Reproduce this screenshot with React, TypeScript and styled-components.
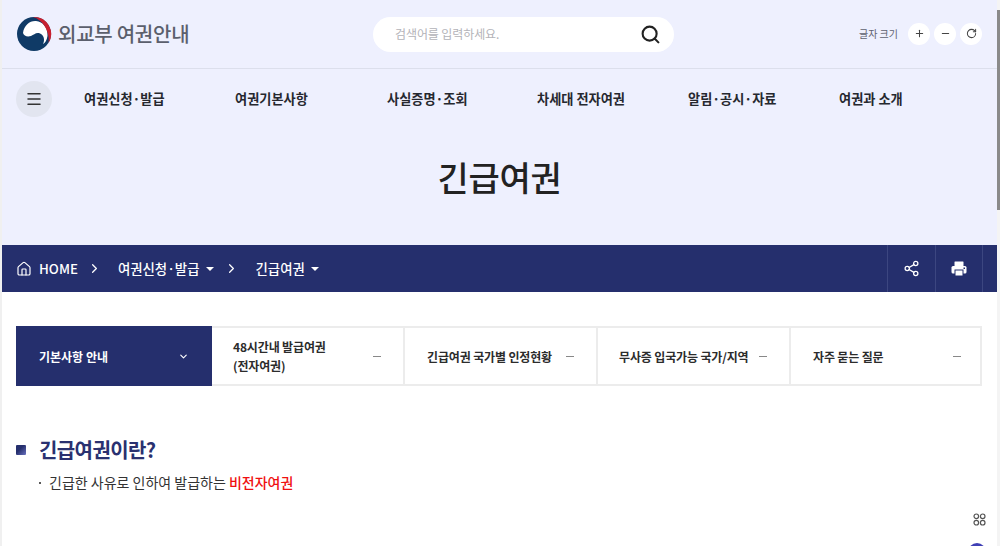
import React from "react";
import styled, { createGlobalStyle } from "styled-components";
import { Home, ChevronRight, ChevronDown, Share2, Plus, Minus, RotateCw, Search, Menu } from "lucide-react";

const Global = createGlobalStyle`
  html, body { margin: 0; padding: 0; height: 546px; overflow: hidden; background: #fff; }
  body { font-family: "Noto Sans CJK KR", "Noto Sans", sans-serif; }
  * { box-sizing: border-box; }
`;
const Page = styled.div`
  position: relative; width: 1000px; height: 546px; overflow: hidden;
  padding-left: 2px; background: #fff; border-left: 0;
  &::before { content: ""; position: absolute; left: 0; top: 0; bottom: 0; width: 2px; background: #f0f0f0; }
`;
const Scrollbar = styled.div`
  position: absolute; right: 0; top: 0; bottom: 0; width: 3px; background: #f4f4f4;
  &::after { content: ""; position: absolute; left: 0; right: 0; top: 10px; height: 200px; background: #8a8a8a; }
`;
const Header = styled.header`
  background: #eef0fe; height: 245px; display: flex; flex-direction: column;
`;
const TopRow = styled.div`
  height: 69px; border-bottom: 1px solid #dcdfec; display: flex; align-items: center;
  padding: 0 15px 1px 14px; margin-right: 3px;
`;
const Brand = styled.div`display: flex; align-items: center; gap: 6px; width: 357px; flex: none;`;
const BrandName = styled.span`
  font-size: 20px; font-weight: 500; color: #5b5f6d; letter-spacing: -0.25px; line-height: 1;
`;
const SearchBox = styled.div`
  width: 301px; height: 35px; margin-top: 1px; border-radius: 18px; background: #fff; display: flex; align-items: center;
  justify-content: space-between; padding: 0 13px 0 22px; flex: none;
`;
const Placeholder = styled.span`font-size: 12px; color: #b3b3b8; line-height: 1; letter-spacing: -0.1px;`;
const FontTools = styled.div`display: flex; align-items: center; gap: 4px; margin-left: auto;`;
const FontLabel = styled.span`font-size: 10px; color: #5f6270; margin-right: 6px; line-height: 1;`;
const RoundBtn = styled.button`
  width: 22px; height: 22px; padding: 0; border: 0; border-radius: 50%; background: #fff; color: #444;
  display: flex; align-items: center; justify-content: center;
`;
const NavRow = styled.nav`display: flex; align-items: center; height: 60px; padding-left: 14px;`;
const MenuBtn = styled.button`
  width: 36px; height: 36px; padding: 0; border: 0; border-radius: 50%; background: #e2e5f0; color: #333;
  display: flex; align-items: center; justify-content: center; flex: none; margin-right: 32px;
`;
const NavItem = styled.a<{ $w: number }>`
  width: ${(p) => p.$w}px; flex: none; font-size: 13.2px; font-weight: 600; color: #26282f; white-space: nowrap;
  padding-bottom: 2px;
`;
const Title = styled.h1`
  margin: 0; padding: 23px 3px 0 0; text-align: center; font-size: 34px; line-height: 50px; font-weight: 500;
  color: #222; letter-spacing: -0.3px;
`;
const Crumbs = styled.div`
  height: 47px; background: #252f6d; display: flex; align-items: center; padding-left: 14px; color: #fff; margin-right: 3px;
`;
const CrumbText = styled.span`font-size: 13.3px; font-weight: 500; margin-left: 7px; line-height: 1;`;
const CrumbLink = styled.span`font-size: 13.4px; font-weight: 500; line-height: 1;`;
const Caret = styled.span`
  width: 0; height: 0; margin-left: 6px; border-left: 4px solid transparent; border-right: 4px solid transparent;
  border-top: 4px solid #fff;
`;
const Sep = styled.span<{ $l: number; $r: number }>`
  display: flex; margin-left: ${(p) => p.$l}px; margin-right: ${(p) => p.$r}px;
`;
const CrumbTools = styled.div`display: flex; margin-left: auto; margin-right: 14px; height: 100%;`;
const CrumbTool = styled.button`
  width: 48px; height: 100%; padding: 0; background: transparent; border: 0; border-left: 1px solid #3c4680; color: #fff;
  display: flex; align-items: center; justify-content: center;
  &:last-child { border-right: 1px solid #3c4680; }
`;
const Tabs = styled.div`display: flex; margin: 34px 15px 0 14px; height: 60px;`;
const ActiveTab = styled.div`
  width: 196px; flex: none; background: #252f6d; color: #fff; display: flex; align-items: center;
  justify-content: space-between; padding: 0 23px; font-size: 12px; font-weight: 700;
`;
const Tab = styled.div<{ $w: number; $pl: number; $pr: number }>`
  width: ${(p) => p.$w}px; flex: none; border: 2px solid #ececec; border-left: 0; display: flex; align-items: center;
  justify-content: space-between; padding: 0 ${(p) => p.$pr}px 0 ${(p) => p.$pl}px; font-size: 12px; font-weight: 600;
  color: #2c2c2c; line-height: 19px; letter-spacing: -0.15px;
`;
const Dash = styled.span`width: 8px; height: 1px; background: #888; flex: none;`;
const Section = styled.section`padding: 51px 0 0 14px;`;
const Heading = styled.h2`
  margin: 0; display: flex; align-items: center; gap: 13px; font-size: 20px; line-height: 26px; font-weight: 700;
  color: #2a3170; letter-spacing: -0.6px;
`;
const Square = styled.span`
  width: 10px; height: 10px; background: linear-gradient(135deg, #252f6d 40%, #6a72c0); border-radius: 1px;
`;
const Bullet = styled.p`
  margin: 8px 0 0 23px; font-size: 14px; line-height: 22px; color: #333; display: flex; align-items: center; gap: 8px;
  &::before { content: ""; width: 2px; height: 2px; margin-top: 2px; background: #222; border-radius: 50%; flex: none; }
`;
const Red = styled.b`color: #f01010; font-weight: 500;`;
const QuickBtn = styled.div`
  position: absolute; right: 3px; top: 504px; width: 36px; height: 30px; display: flex; align-items: center;
  justify-content: center; color: #555; background: rgba(255,255,255,.7);
`;
const FloatDot = styled.div`
  position: absolute; left: 968px; top: 543px; width: 18px; height: 18px; border-radius: 50%; background: #3f3fb5;
`;

const Logo = () => (
  <svg width="36" height="36" viewBox="0 0 36 36">
    <circle cx="18" cy="18" r="17" fill="#0f3a66" />
    <path d="M7 17 C8 9 14 4.5 20 5 C27 5.5 32 12 31.5 20 C31 24 29 27 27 28 C29 24 28 19 24 17.5 C20 16 18 19 15 20 C11 21 8 20 7 17Z" fill="#fff" />
    <path d="M17 1 A17 17 0 0 1 32.5 27 C34 17 28 4 17 1Z" fill="#c8202f" />
  </svg>
);
const Grid = () => (
  <svg width="13" height="13" viewBox="0 0 13 13" fill="none" stroke="#555" strokeWidth="1.2">
    <circle cx="3.3" cy="3.3" r="2.3" /><circle cx="9.7" cy="3.3" r="2.3" />
    <circle cx="3.3" cy="9.7" r="2.3" /><circle cx="9.7" cy="9.7" r="2.3" />
  </svg>
);
const PrintIcon = () => (
  <svg width="16" height="16" viewBox="0 0 16 16">
    <rect x="3.5" y="0.5" width="9" height="4.5" rx="0.5" fill="#fff" />
    <rect x="0.5" y="5" width="15" height="7.5" rx="1.5" fill="#fff" />
    <rect x="4" y="9" width="8" height="6" fill="#fff" stroke="#252f6d" strokeWidth="1" />
    <rect x="12.5" y="6.5" width="1.5" height="1.5" fill="#252f6d" />
  </svg>
);

export default function App() {
  return (
    <Page>
      <Global />
      <Header>
        <TopRow>
          <Brand><Logo /><BrandName>외교부 여권안내</BrandName></Brand>
          <SearchBox>
            <Placeholder>검색어를 입력하세요.</Placeholder>
            <Search size={21} strokeWidth={2.4} color="#222" />
          </SearchBox>
          <FontTools>
            <FontLabel>글자 크기</FontLabel>
            <RoundBtn><Plus size={11} strokeWidth={2.2} /></RoundBtn>
            <RoundBtn><Minus size={11} strokeWidth={2.2} /></RoundBtn>
            <RoundBtn><RotateCw size={11} strokeWidth={2.2} /></RoundBtn>
          </FontTools>
        </TopRow>
        <NavRow>
          <MenuBtn><Menu size={18} strokeWidth={2} /></MenuBtn>
          <NavItem $w={151}>여권신청·발급</NavItem>
          <NavItem $w={152}>여권기본사항</NavItem>
          <NavItem $w={150}>사실증명·조회</NavItem>
          <NavItem $w={151}>차세대 전자여권</NavItem>
          <NavItem $w={151}>알림·공시·자료</NavItem>
          <NavItem $w={80}>여권과 소개</NavItem>
        </NavRow>
        <Title>긴급여권</Title>
      </Header>
      <Crumbs>
        <Home size={16} strokeWidth={1.8} />
        <CrumbText>HOME</CrumbText>
        <Sep $l={9} $r={16}><ChevronRight size={15} /></Sep>
        <CrumbLink>여권신청·발급</CrumbLink><Caret />
        <Sep $l={10} $r={17}><ChevronRight size={15} /></Sep>
        <CrumbLink>긴급여권</CrumbLink><Caret />
        <CrumbTools>
          <CrumbTool><Share2 size={17} strokeWidth={1.8} /></CrumbTool>
          <CrumbTool><PrintIcon /></CrumbTool>
        </CrumbTools>
      </Crumbs>
      <Tabs>
        <ActiveTab>기본사항 안내<ChevronDown size={11} strokeWidth={2.5} /></ActiveTab>
        <Tab $w={193} $pl={21} $pr={22}><span>48시간내 발급여권<br />(전자여권)</span><Dash /></Tab>
        <Tab $w={193} $pl={22} $pr={22}><span>긴급여권 국가별 인정현황</span><Dash /></Tab>
        <Tab $w={193} $pl={21} $pr={22}><span>무사증 입국가능 국가/지역</span><Dash /></Tab>
        <Tab $w={191} $pl={22} $pr={19}><span>자주 묻는 질문</span><Dash /></Tab>
      </Tabs>
      <Section>
        <Heading><Square />긴급여권이란?</Heading>
        <Bullet><span>긴급한 사유로 인하여 발급하는 <Red>비전자여권</Red></span></Bullet>
      </Section>
      <QuickBtn><Grid /></QuickBtn>
      <FloatDot />
      <Scrollbar />
    </Page>
  );
}
